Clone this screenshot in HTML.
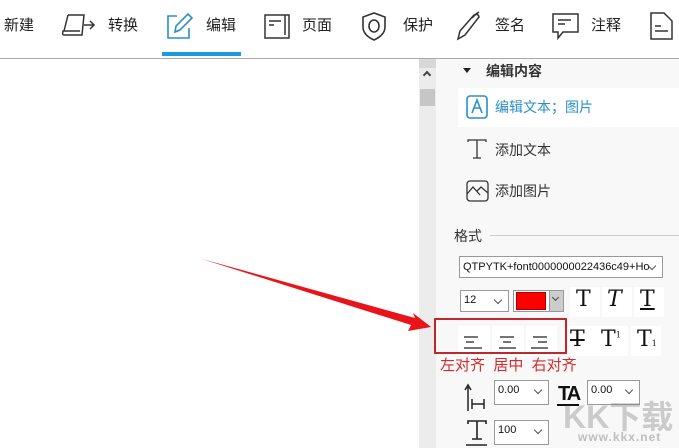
<!DOCTYPE html>
<html><head><meta charset="utf-8">
<style>
*{margin:0;padding:0;box-sizing:border-box}
body{width:679px;height:448px;overflow:hidden;background:#fff;position:relative;font-family:"Liberation Sans","Noto Sans CJK SC",sans-serif;color:#222}
.a{position:absolute}
.t{position:absolute;font-size:15px;top:16px;line-height:20px;color:#222}
.p{font-size:14px;color:#333;position:absolute;line-height:18px}
.sel{position:absolute;background:#fff;border:1px solid #999;height:22px;font-size:11px;padding:3px 0 0 3px;color:#111}
.sel:after{content:"";position:absolute;right:7px;top:6px;width:5px;height:5px;border-right:1px solid #555;border-bottom:1px solid #555;transform:rotate(45deg)}
.btn{position:absolute;width:30px;height:30px;background:#fff}
.T{position:absolute;font:22px "DejaVu Serif",serif;color:#111}
</style></head><body>
<div class="t" style="left:4px">新建</div>
<svg class="a" style="left:60px;top:11px" width="38" height="30" viewBox="0 0 38 30" fill="none" stroke="#333" stroke-width="1.5"><path d="M8 4 H24 L22 24 H4 Q2 24 3 20 H20"/><path d="M8 4 L4 20"/><path d="M24 14 H34 M30 10 L34 14 L30 18"/></svg>
<div class="t" style="left:108px">转换</div>
<svg class="a" style="left:165px;top:11px" width="30" height="30" viewBox="0 0 30 30" fill="none" stroke="#2a8fc7" stroke-width="1.6"><path d="M12 5 H3 V27 H24 V17"/><path d="M10 21 L11 15 L23 3 L27 7 L15 19 Z"/><path d="M10 21 L15 19"/></svg>
<div class="t" style="left:206px">编辑</div>
<div class="a" style="left:162px;top:52px;width:79px;height:4px;background:#1a9ae0"></div>
<svg class="a" style="left:263px;top:11px" width="30" height="30" viewBox="0 0 30 30" fill="none" stroke="#333" stroke-width="1.5"><rect x="2" y="4" width="24" height="23"/><path d="M22 4 V24 M6 10 H18 M6 14 H11"/></svg>
<div class="t" style="left:302px">页面</div>
<svg class="a" style="left:359px;top:10px" width="30" height="32" viewBox="0 0 30 32" fill="none" stroke="#333" stroke-width="1.6"><path d="M15 3 L26 7 V17 Q26 25 15 30 Q4 25 4 17 V7 Z"/><ellipse cx="15" cy="16" rx="5" ry="6"/></svg>
<div class="t" style="left:403px">保护</div>
<svg class="a" style="left:454px;top:11px" width="30" height="30" viewBox="0 0 30 30" fill="none" stroke="#333" stroke-width="1.5"><path d="M4 28 L6 20 L20 4 Q24 2 25 6 L11 24 Z"/><path d="M18 7 L22 3 L25 1"/></svg>
<div class="t" style="left:495px">签名</div>
<svg class="a" style="left:551px;top:11px" width="30" height="32" viewBox="0 0 30 32" fill="none" stroke="#333" stroke-width="1.5"><path d="M2 3 H27 V21 H12 L7 27 V21 H2 Z"/><path d="M7 9 H20 M7 13 H14"/></svg>
<div class="t" style="left:591px">注释</div>
<svg class="a" style="left:648px;top:11px" width="28" height="30" viewBox="0 0 28 30" fill="none" stroke="#333" stroke-width="1.5"><path d="M3 2 H16 L24 10 V28 H3 Z"/><path d="M7 15 H13 M7 20 H20"/></svg>
<div class="a" style="left:0;top:58px;width:679px;height:1px;background:#aaa"></div>
<div class="a" style="left:419px;top:59px;width:17px;height:389px;background:#ececec"></div>
<div class="a" style="left:419px;top:59px;width:17px;height:9px;background:#d8d8d8"></div>
<div class="a" style="left:424px;top:72px;width:6px;height:6px;border-left:2px solid #444;border-top:2px solid #444;transform:rotate(45deg)"></div>
<div class="a" style="left:420px;top:89px;width:15px;height:17px;background:#c6c6c6"></div>
<div class="a" style="left:436px;top:59px;width:243px;height:389px;background:#f8f8f8"></div>
<div class="a" style="left:463px;top:68px;width:0;height:0;border-left:4px solid transparent;border-right:4px solid transparent;border-top:5px solid #222"></div>
<div class="p" style="left:486px;top:62px;font-weight:bold;color:#333">编辑内容</div>
<div class="a" style="left:458px;top:88px;width:221px;height:39px;background:#fff"></div>
<svg class="a" style="left:466px;top:95px" width="22" height="24" viewBox="0 0 22 24" fill="none" stroke="#2a8fc7" stroke-width="1.6"><rect x="1" y="1" width="20" height="22" rx="3"/><path d="M6 18 L11 5 L16 18 M8 13 H14"/></svg>
<div class="p" style="left:495px;top:98px;color:#2a8fc7">编辑文本；图片</div>
<svg class="a" style="left:466px;top:138px" width="22" height="22" viewBox="0 0 22 22" fill="none" stroke="#333" stroke-width="1.3"><path d="M2 4 V2 H20 V4 M11 2 V20 M7 20 H15"/></svg>
<div class="p" style="left:495px;top:141px">添加文本</div>
<svg class="a" style="left:466px;top:180px" width="23" height="22" viewBox="0 0 23 22" fill="none" stroke="#333" stroke-width="1.3"><rect x="1" y="1" width="21" height="20" rx="3"/><path d="M1 14 L7 7 L14 15 M11 11 L15 7 L22 13"/></svg>
<div class="p" style="left:495px;top:182px">添加图片</div>
<div class="p" style="left:454px;top:227px">格式</div>
<div class="a" style="left:490px;top:235px;width:189px;height:1px;background:#ccc"></div>
<div class="sel" style="left:459px;top:256px;width:204px;padding-top:4px">QTPYTK+font0000000022436c49+Ho</div>
<div class="sel" style="left:460px;top:290px;width:49px">12</div>
<div class="a" style="left:513px;top:290px;width:51px;height:22px;background:#fff;border:1px solid #999"></div>
<div class="a" style="left:516px;top:292px;width:30px;height:18px;background:#f00;border:1px solid #a00"></div>
<div class="a" style="left:549px;top:291px;width:14px;height:20px;background:#ccc;border-left:1px solid #999"></div>
<div class="a" style="left:553px;top:295px;width:5px;height:5px;border-right:1px solid #444;border-bottom:1px solid #444;transform:rotate(45deg)"></div>
<div class="btn" style="left:570px;top:287px"></div><div class="btn" style="left:602px;top:287px"></div><div class="btn" style="left:634px;top:287px"></div>
<div class="T" style="left:576px;top:287px">T</div>
<div class="T" style="left:607px;top:287px;font-style:italic">T</div>
<div class="T" style="left:640px;top:287px;text-decoration:underline">T</div>
<div class="btn" style="left:458px;top:326px;width:32px"></div><div class="btn" style="left:492px;top:326px;width:32px"></div><div class="btn" style="left:526px;top:326px;width:31px"></div>
<div class="btn" style="left:568px;top:326px"></div><div class="btn" style="left:598px;top:326px"></div><div class="btn" style="left:631px;top:326px"></div>
<svg class="a" style="left:460px;top:335px" width="100" height="16" viewBox="0 0 100 16" stroke="#222" stroke-width="1.2"><path d="M4 2 H18 M6 7 H14 M4 13 H22"/><path d="M40 2 H54 M43 7 H51 M39 13 H56"/><path d="M73 2 H87 M78 7 H87 M71 13 H88"/></svg>
<div class="T" style="left:570px;top:327px;text-decoration:line-through">T</div>
<div class="T" style="left:601px;top:327px">T<sup style="font-size:8px">1</sup></div>
<div class="T" style="left:637px;top:327px">T<span style="font-size:8px">1</span></div>
<div class="a" style="left:434px;top:318px;width:133px;height:36px;border:2px solid #c0272d"></div>
<div class="a" style="left:440px;top:356px;font-size:15px;color:#d32a2a;line-height:20px;white-space:nowrap">左对齐&nbsp;&nbsp;居中&nbsp;&nbsp;右对齐</div>
<svg class="a" style="left:464px;top:383px" width="24" height="30" viewBox="0 0 24 30" fill="none" stroke="#222" stroke-width="1.5"><path d="M4 28 V4 M1 7 L4 2 L7 7"/><path d="M8 21 H20 M8 16 V26 M20 16 V26"/></svg>
<div class="sel" style="left:494px;top:380px;width:55px;height:25px">0.00</div>
<div class="a" style="left:558px;top:383px;font:bold 20px 'Liberation Sans',sans-serif;color:#111;letter-spacing:-2px">TA</div>
<div class="a" style="left:557px;top:404px;width:22px;height:2px;background:#111"></div>
<div class="sel" style="left:587px;top:380px;width:53px;height:25px">0.00</div>
<svg class="a" style="left:463px;top:419px" width="28" height="29" viewBox="0 0 28 29" fill="none" stroke="#222" stroke-width="1.6"><path d="M5 5 V2 H23 V5 M14 2 V20 M9 20 H19 M3 26 H24"/></svg>
<div class="sel" style="left:494px;top:420px;width:55px;height:25px">100</div>
<div class="a" style="left:563px;top:392px;font:bold 32px 'Liberation Sans','Noto Sans CJK SC',sans-serif;color:rgba(120,120,120,.35);white-space:nowrap">KK下载</div>
<div class="a" style="left:578px;top:430px;font:bold 12px 'Liberation Sans',sans-serif;color:rgba(120,120,120,.45);letter-spacing:1px;white-space:nowrap">www.kkx.net</div>
<svg class="a" style="left:0;top:0" width="679" height="448"><path d="M202 259 L415 318 L413 313 L431 327 L408 331 L411 325 Z" fill="#e8141a"/></svg>
</body></html>
